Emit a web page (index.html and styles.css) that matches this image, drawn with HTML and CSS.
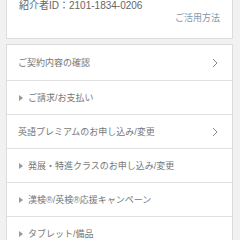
FILE: index.html
```html
<html>
<head>
    <title>マイページ</title>
    <link rel="stylesheet" href="styles.css">
</head>
<body>
<div class="page">
    <div class="card info">
        <div class="referrer">紹介者ID：2101-1834-0206</div>
        <div class="howto">ご活用方法</div>
    </div>

    <div class="card menu">
        <div class="row first">
            <span class="label">ご契約内容の確認</span>
            <svg class="chev" width="8" height="10" viewBox="0 0 8 10"><polyline points="2,1 6,5 2,9" fill="none" stroke="#888" stroke-width="1"/></svg>
        </div>
        <div class="row">
            <span class="tri"></span><span class="label">ご請求/お支払い</span>
        </div>
        <div class="row">
            <span class="label">英語プレミアムのお申し込み/変更</span>
            <svg class="chev" width="8" height="10" viewBox="0 0 8 10"><polyline points="2,1 6,5 2,9" fill="none" stroke="#888" stroke-width="1"/></svg>
        </div>
        <div class="row">
            <span class="tri"></span><span class="label">発展・特進クラスのお申し込み/変更</span>
        </div>
        <div class="row">
            <span class="tri"></span><span class="label">漢検®/英検®応援キャンペーン</span>
        </div>
        <div class="row">
            <span class="tri"></span><span class="label">タブレット/備品</span>
        </div>
    </div>
</div>
</body>
</html>
```

FILE: styles.css
```css
body {
    margin: 0;
    background-color: #f1f1f1;
    font-family: "Liberation Sans", "Noto Sans CJK JP", sans-serif;
    color: #777;
    overflow: hidden;
}

.page {
    padding: 0 7px 0 6px;
}

.card {
    background: #fff;
    border: 1px solid #dcdcdc;
}

.info {
    margin-top: -12px;
    padding: 11px 12px 14px 12px;
}

.referrer {
    font-size: 10px;
    line-height: 12px;
    color: #666;
}

.howto {
    text-align: right;
    font-size: 9px;
    line-height: 12px;
    color: #7e97ab;
}

.menu {
    margin-top: 5px;
}

.row {
    display: flex;
    align-items: center;
    height: 33px;
    padding: 0 12px 0 11px;
    border-top: 1px solid #e0e0e0;
    font-size: 9px;
}

.row.first {
    border-top: none;
    height: 35px;
}

.label {
    flex: 1;
    white-space: nowrap;
}

.tri {
    width: 0;
    height: 0;
    border-top: 3px solid transparent;
    border-bottom: 3px solid transparent;
    border-left: 4px solid #999;
    margin: 0 5px 0 1px;
}

.chev {
    margin-right: 1px;
}
```
